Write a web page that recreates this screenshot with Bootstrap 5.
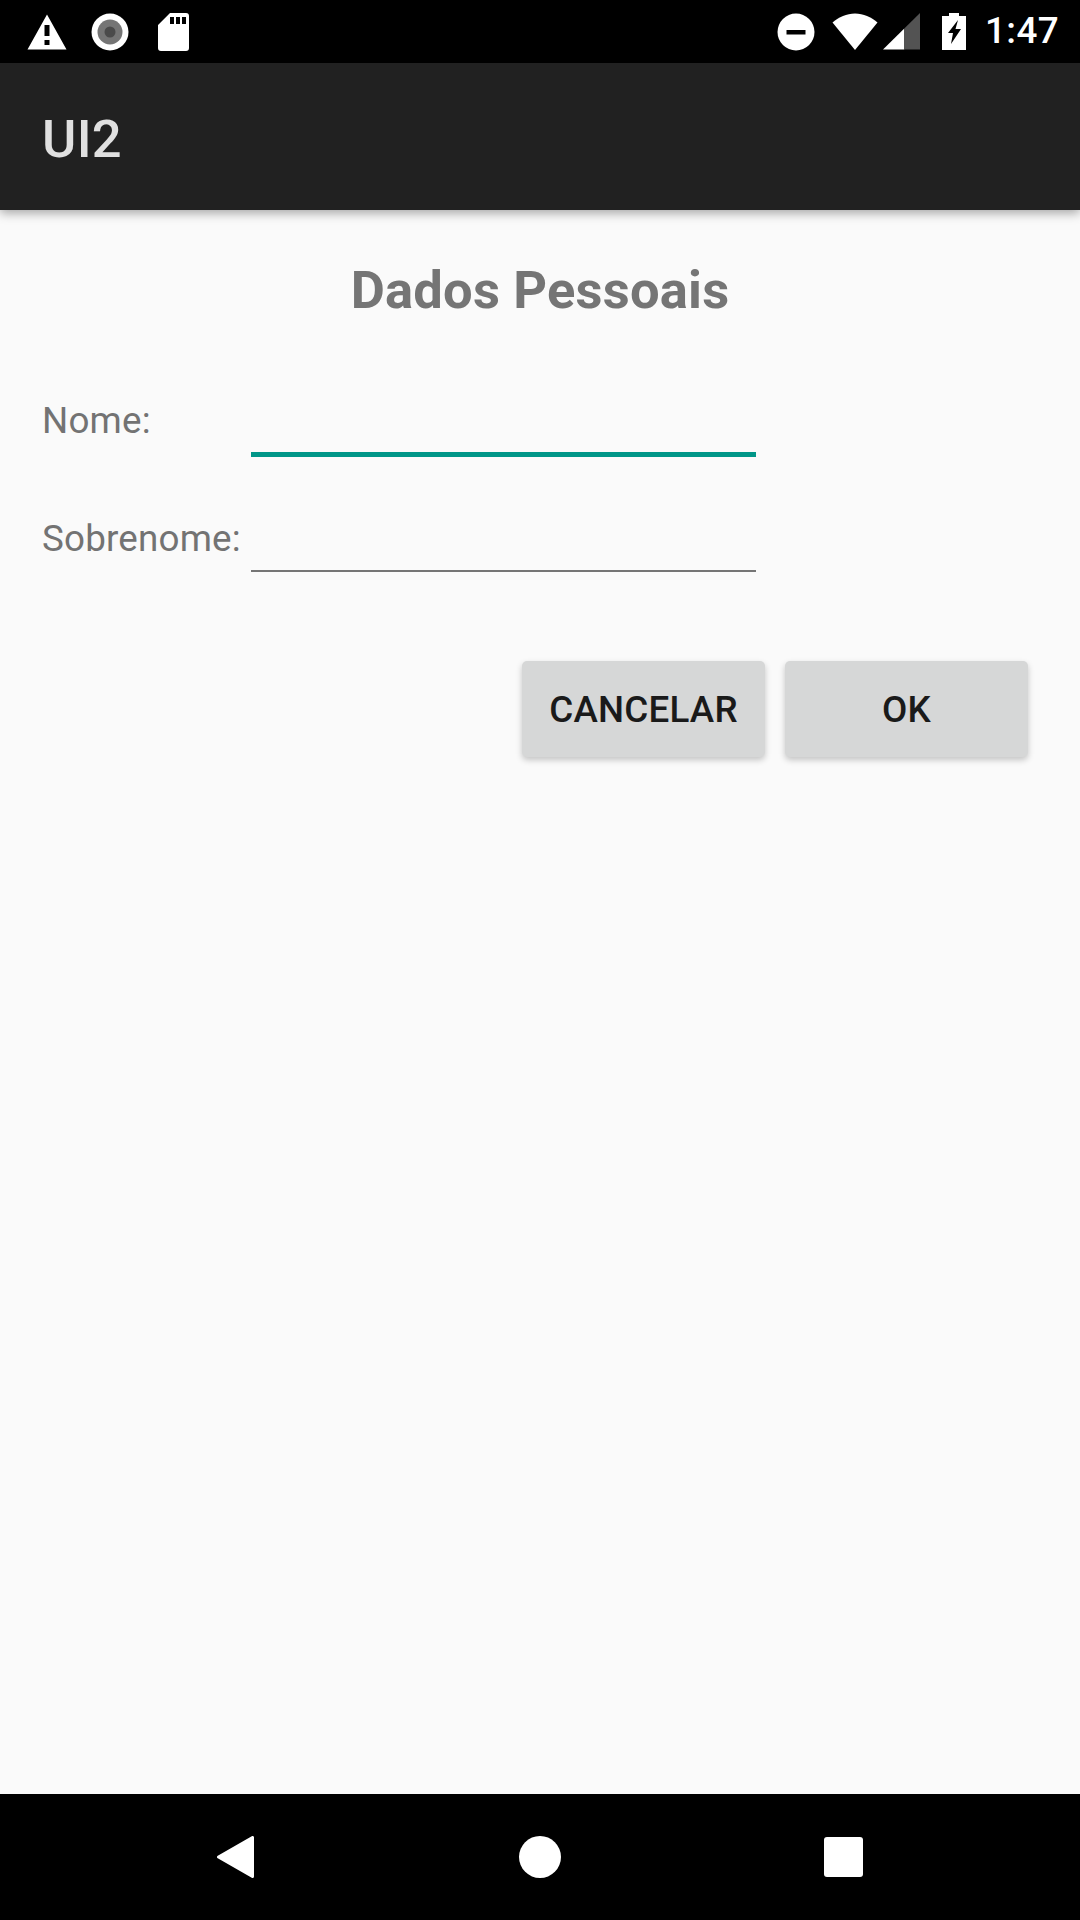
<!DOCTYPE html>
<html lang="pt">
<head>
    <meta charset="UTF-8">
    <meta name="viewport" content="width=device-width, initial-scale=1.0">
    <title>UI2</title>
    <link href="https://cdn.jsdelivr.net/npm/bootstrap@5.3.0/dist/css/bootstrap.min.css" rel="stylesheet">
    <style>
        html, body {
            height: 1920px;
            overflow: hidden;
        }
        body {
            background-color: #fafafa;
            font-family: Roboto, "Liberation Sans", sans-serif;
            color: #737373;
        }
        .status-bar {
            height: 63px;
            background-color: #000;
            padding-left: 27px;
            padding-right: 21px;
        }
        .status-bar svg {
            display: block;
            flex: none;
        }
        .status-time {
            color: #fff;
            font-size: 36.75px;
            font-weight: 500;
            line-height: 1;
            margin-left: 19px;
            letter-spacing: .4px;
        }
        .app-bar {
            height: 147px;
            background-color: #212121;
            padding-left: 42px;
            padding-top: 5px;
            color: #e0e0e0;
            font-size: 52.5px;
            font-weight: 500;
            letter-spacing: .3px;
            line-height: 1;
            box-shadow: 0 3px 10px rgba(0, 0, 0, .35);
            position: relative;
        }
        .screen-body {
            padding: 0 52px 0 42px;
        }
        .page-title {
            color: #757575;
            font-size: 52.5px;
            font-weight: 700;
            letter-spacing: .2px;
            line-height: 62px;
            margin: 49px 0 0;
            padding-left: 10px;
        }
        .field-row {
            height: 116px;
        }
        .field-row-last {
            height: 115px;
        }
        .field-row label {
            width: 209px;
            flex: none;
            font-size: 36.75px;
            letter-spacing: .2px;
            line-height: 44px;
            margin-bottom: 14px;
        }
        .field-row-last label {
            margin-bottom: 11px;
        }
        .field-input {
            width: 505px;
            height: 60px;
            flex: none;
            background: transparent;
            border: 0;
            border-bottom: 2.5px solid #757575;
            border-radius: 0;
            padding: 0;
            box-shadow: none;
        }
        .field-input.is-active {
            border-bottom: 5px solid #009688;
        }
        .form-area {
            margin-top: 20px;
        }
        .action-row {
            margin-top: 89px;
            gap: 20px;
        }
        .action-btn {
            width: 243px;
            height: 96px;
            padding: 2px 0 0;
            border: 0;
            border-radius: 5px;
            background-color: #d6d7d7;
            color: #1a1a1a;
            font-size: 36.75px;
            font-weight: 500;
            letter-spacing: .2px;
            box-shadow: 0 3px 6px rgba(0, 0, 0, .22);
        }
        .nav-bar {
            height: 126px;
            background-color: #000;
        }
    </style>
</head>
<body class="d-flex flex-column">
<div class="status-bar d-flex align-items-center">
    <svg width="40" height="36" viewBox="0 0 40 36"><path fill="#fff" fill-rule="evenodd" d="M20 .5 39.500 35.500H.500ZM17.500 11v11h5V11ZM17.500 26v5h5v-5Z"/></svg>
    <svg class="ms-4" width="38" height="38" viewBox="0 0 38 38"><circle cx="19" cy="19" r="18.500" fill="#fff"/><circle cx="19" cy="19" r="12.500" fill="#757575"/><circle cx="19" cy="19" r="5.500" fill="#4a4a4a"/></svg>
    <svg style="margin-left:29px" width="31" height="38" viewBox="0 0 31 38"><path fill="#fff" fill-rule="evenodd" d="M12 0h16a3 3 0 0 1 3 3v32a3 3 0 0 1-3 3H3a3 3 0 0 1-3-3V12ZM12 4v7h4V4Zm6 0v7h4V4Zm6 0v7h4V4Z"/></svg>
    <svg class="ms-auto" width="38" height="38" viewBox="0 0 38 38"><circle cx="19" cy="19" r="18.500" fill="#fff"/><rect x="9.500" y="17" width="19" height="4.500" fill="#000"/></svg>
    <svg style="margin-left:17px" width="46" height="37" viewBox="0 0 46 37"><path fill="#fff" d="M23 37 .5 9.500C7 4 14.500.5 23 .5S39 4 45.500 9.500Z"/></svg>
    <svg style="margin-left:5px" width="37" height="37" viewBox="0 0 37 37"><path fill="#fff" d="M0 36.500 21.300 15.500v21Z"/><path fill="#535353" d="M21.300 15.500 37 0v36.500H21.300Z"/></svg>
    <svg style="margin-left:22px" width="24" height="37" viewBox="0 0 24 37"><path fill="#fff" fill-rule="evenodd" d="M7 0h10v3h7v34H0V3h7ZM16 7 6 20h5l-2 11 10-15h-5.500L16 7Z"/></svg>
    <span class="status-time">1:47</span>
</div>
<header class="app-bar d-flex align-items-center">UI2</header>
<main class="screen-body flex-grow-1">
    <h1 class="page-title text-center">Dados Pessoais</h1>
    <form class="form-area">
        <div class="field-row d-flex align-items-end">
            <label for="nome">Nome:</label>
            <input id="nome" type="text" class="field-input is-active form-control">
        </div>
        <div class="field-row field-row-last d-flex align-items-end">
            <label for="sobrenome">Sobrenome:</label>
            <input id="sobrenome" type="text" class="field-input form-control">
        </div>
        <div class="action-row d-flex justify-content-end">
            <button type="button" class="btn action-btn">CANCELAR</button>
            <button type="button" class="btn action-btn">OK</button>
        </div>
    </form>
</main>
<footer class="nav-bar d-flex align-items-center">
    <svg style="margin-left:217px" width="37" height="42" viewBox="0 0 37 42"><path fill="#fff" stroke="#fff" stroke-width="3" stroke-linejoin="round" d="M35.500 1.500v39L1.500 21Z"/></svg>
    <svg style="margin-left:265px" width="42" height="42" viewBox="0 0 42 42"><circle cx="21" cy="21" r="21" fill="#fff"/></svg>
    <svg style="margin-left:263px" width="39" height="40" viewBox="0 0 39 40"><rect width="39" height="40" rx="3" fill="#fff"/></svg>
</footer>
<script src="https://cdn.jsdelivr.net/npm/bootstrap@5.3.0/dist/js/bootstrap.bundle.min.js"></script>
</body>
</html>
